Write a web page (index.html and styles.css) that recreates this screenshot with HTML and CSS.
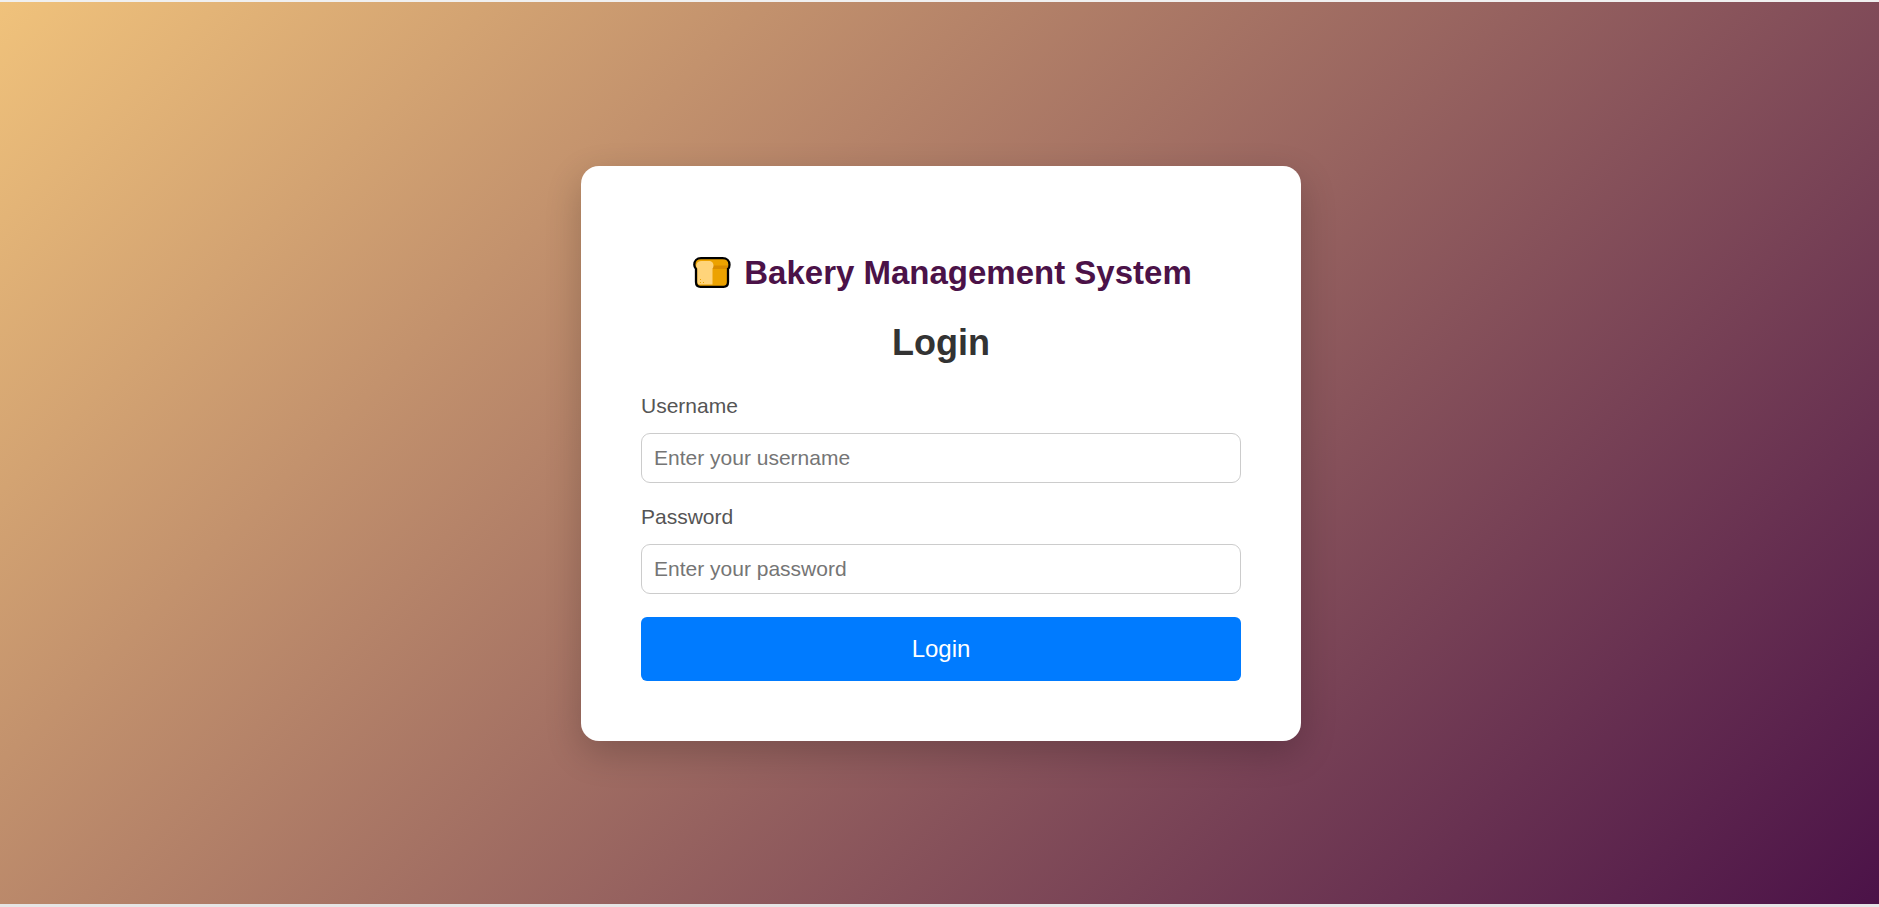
FILE: index.html
```html
<!DOCTYPE html>
<html lang="en">
<head>
<meta charset="utf-8">
<meta name="viewport" content="width=device-width, initial-scale=1">
<title>Bakery Management System</title>
<link rel="stylesheet" href="styles.css">
</head>
<body>
<main class="page">
  <section class="card">
    <h1 class="brand">
      <svg class="brand-icon" viewBox="0 0 44 34" aria-hidden="true">
        <path d="M11 2.200H32.500C37 2.200 39.500 5 39.500 8.800C39.500 11 38.800 12.500 38 13V26C38 29.300 36.300 30.800 33.500 30.800H10.500C7.500 30.800 6 29 6 26V13C5 12 4.300 11 4.300 8.800C4.300 5 6.800 2.200 11 2.200Z" fill="#eca200"/>
        <path d="M22 9.500H38.500C38.500 11.500 38 13 36.500 13H22Z" fill="#d98c00"/>
        <path d="M11.500 5H18.500C22 5 23.500 7 23.500 9.500C23.500 11.500 22.500 12.500 22.500 12.500V28.500H9.500C8 28.500 7.200 27.500 7.200 26V12.500C5.500 11 5.500 5 11.500 5Z" fill="#ffd47a"/>
        <path d="M10 23h1v1h-1zM10 26h1v1h-1zM13 26h1v1h-1z" fill="#eca200"/>
        <path d="M11 2.200H32.500C37 2.200 39.500 5 39.500 8.800C39.500 11 38.800 12.500 38 13V26C38 29.300 36.300 30.800 33.500 30.800H10.500C7.500 30.800 6 29 6 26V13C5 12 4.300 11 4.300 8.800C4.300 5 6.800 2.200 11 2.200Z" fill="none" stroke="#000" stroke-width="2.300"/>
      </svg>
      <span>Bakery Management System</span>
    </h1>
    <h2 class="title">Login</h2>
    <form class="form">
      <div class="field">
        <label class="label" for="username">Username</label>
        <input class="input" id="username" name="username" type="text" placeholder="Enter your username">
      </div>
      <div class="field">
        <label class="label" for="password">Password</label>
        <input class="input" id="password" name="password" type="password" placeholder="Enter your password">
      </div>
      <button class="submit" type="submit">Login</button>
    </form>
  </section>
</main>
</body>
</html>
```
FILE: styles.css
```css
* {
  box-sizing: border-box;
}

body {
  margin: 0;
  font-family: Arial, "Liberation Sans", sans-serif;
}

.page {
  display: flex;
  align-items: center;
  justify-content: center;
  min-height: 100vh;
  padding-left: 3px;
  border-top: 2px solid #f0f0f0;
  border-bottom: 3px solid #e6e6e6;
  background: linear-gradient(135deg, #f0c27b, #4b1248) padding-box;
}

.card {
  width: 100%;
  max-width: 720px;
  padding: 60px;
  border-radius: 18px;
  background: #fff;
  box-shadow: 0 12px 36px rgba(0, 0, 0, 0.2);
}

.brand {
  display: flex;
  align-items: center;
  justify-content: center;
  gap: 10px;
  margin: 28px 0 30px;
  font-size: 33px;
  line-height: 38px;
  color: #4b1248;
}

.brand-icon {
  width: 44px;
  height: 34px;
}

.title {
  margin: 0 0 31px;
  font-size: 36px;
  line-height: 42px;
  text-align: center;
  color: #333;
}

.field {
  margin-bottom: 23px;
}

.label {
  display: block;
  margin-bottom: 16px;
  font-size: 21px;
  line-height: 22px;
  color: #555;
}

.input {
  display: block;
  width: 100%;
  padding: 12px;
  border: 1px solid #ccc;
  border-radius: 9px;
  font-family: inherit;
  font-size: 21px;
  line-height: 24px;
  background: #fff;
}

.input::placeholder {
  color: #757575;
}

.submit {
  display: block;
  width: 100%;
  padding: 18px;
  border: 0;
  border-radius: 6px;
  font-family: inherit;
  font-size: 24px;
  line-height: 28px;
  color: #fff;
  background: #007bff;
  cursor: pointer;
}
```
